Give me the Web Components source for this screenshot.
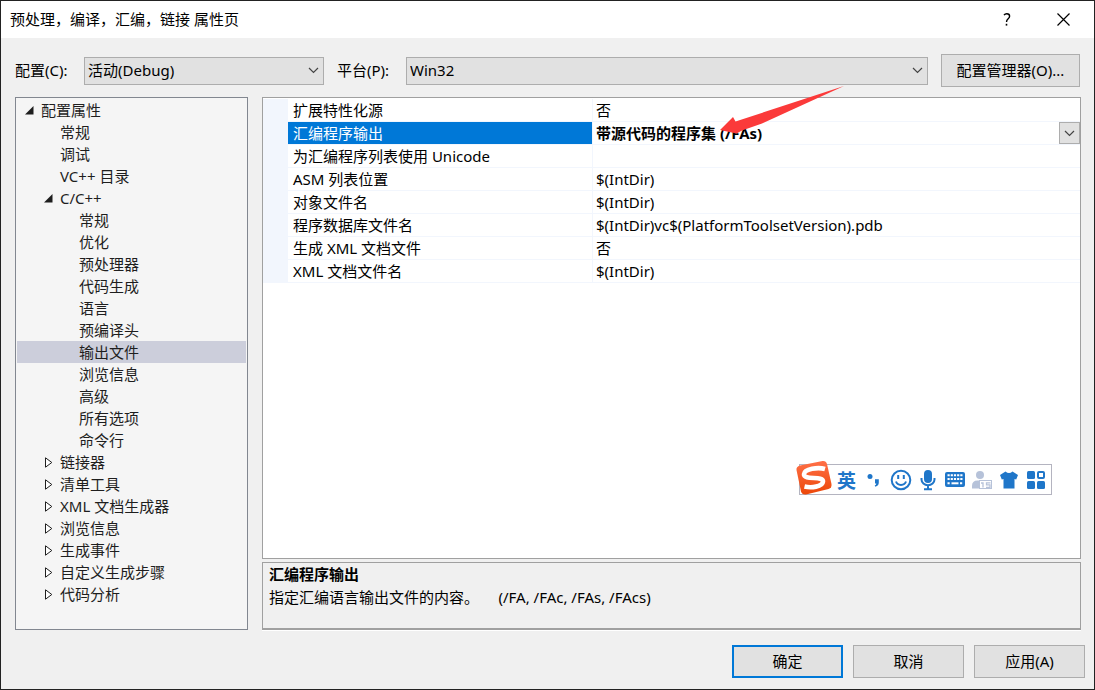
<!DOCTYPE html>
<html lang="zh-CN">
<head>
<meta charset="utf-8">
<title>预处理，编译，汇编，链接 属性页</title>
<style>
  body {
    margin: 0;
    color: #000;
    font: 15px/22px "Noto Sans", "Noto Sans CJK SC", sans-serif;
    background: #f0f0f0;
  }
</style>
</head>
<body>
<property-dialog heading="预处理，编译，汇编，链接 属性页">
  <select-field slot="tools" class="config" label="配置(C):" options="活动(Debug)|Debug|Release"></select-field>
  <select-field slot="tools" class="platform" label="平台(P):" options="Win32|x64"></select-field>
  <push-button slot="tools" class="manager">配置管理器(O)...</push-button>

  <nav-tree slot="nav">
    <tree-item label="配置属性" level="0" state="open">
      <tree-item label="常规" level="1"></tree-item>
      <tree-item label="调试" level="1"></tree-item>
      <tree-item label="VC++ 目录" level="1"></tree-item>
      <tree-item label="C/C++" level="1" state="open">
        <tree-item label="常规" level="2"></tree-item>
        <tree-item label="优化" level="2"></tree-item>
        <tree-item label="预处理器" level="2"></tree-item>
        <tree-item label="代码生成" level="2"></tree-item>
        <tree-item label="语言" level="2"></tree-item>
        <tree-item label="预编译头" level="2"></tree-item>
        <tree-item label="输出文件" level="2" selected></tree-item>
        <tree-item label="浏览信息" level="2"></tree-item>
        <tree-item label="高级" level="2"></tree-item>
        <tree-item label="所有选项" level="2"></tree-item>
        <tree-item label="命令行" level="2"></tree-item>
      </tree-item>
      <tree-item label="链接器" level="1" state="closed"></tree-item>
      <tree-item label="清单工具" level="1" state="closed"></tree-item>
      <tree-item label="XML 文档生成器" level="1" state="closed"></tree-item>
      <tree-item label="浏览信息" level="1" state="closed"></tree-item>
      <tree-item label="生成事件" level="1" state="closed"></tree-item>
      <tree-item label="自定义生成步骤" level="1" state="closed"></tree-item>
      <tree-item label="代码分析" level="1" state="closed"></tree-item>
    </tree-item>
  </nav-tree>

  <property-grid slot="grid">
    <pointer-arrow></pointer-arrow>
    <ime-bar></ime-bar>
  </property-grid>

  <help-pane slot="help" heading="汇编程序输出">指定汇编语言输出文件的内容。     (/FA, /FAc, /FAs, /FAcs)</help-pane>

  <push-button slot="actions" primary>确定</push-button>
  <push-button slot="actions">取消</push-button>
  <push-button slot="actions">应用(A)</push-button>
</property-dialog>

<script>
class BaseElement extends HTMLElement {
  connectedCallback() {
    if (this.shadowRoot) return;
    const root = this.attachShadow({ mode: "open" });
    root.innerHTML = "<style>*{box-sizing:border-box}</style>" + this.render();
  }
}

customElements.define("property-dialog", class extends BaseElement {
  render() {
    return `
    <style>
      :host { display: block; }
      .window { display: flex; flex-direction: column; min-height: 100vh; border: 1px solid #222; background: #f0f0f0; }
      header { display: flex; align-items: stretch; height: 37px; padding: 0 2px 0 9px; background: #fff; }
      h1 { flex: 1; margin: 0; font: inherit; line-height: 37px; }
      header button { display: grid; place-items: center; width: 57px; padding: 0; border: 0; background: none; color: #000; }
      .tools { display: flex; align-items: center; gap: 13px; padding: 16px 14px 10px; }
      .main { flex: 1; display: grid; grid-template-columns: 233px minmax(0, 1fr); gap: 14px; padding: 0 13px 0 14px; }
      .right { display: flex; flex-direction: column; gap: 3px; }
      footer { display: flex; justify-content: flex-end; gap: 10px; padding: 15px 9px 11px; }
      ::slotted(.config) { flex: 0 0 309px; }
      ::slotted(.platform) { flex: 1; }
      ::slotted(.manager) { flex: 0 0 139px; }
      ::slotted([slot=actions]) { flex: 0 0 111px; }
      ::slotted([slot=grid]) { flex: 1; }
    </style>
    <div class="window">
      <header>
        <h1>${this.getAttribute("heading")}</h1>
        <button type="button" aria-label="帮助"><svg width="8" height="13" viewBox="0 0 8 13" fill="none" stroke="#000" stroke-width="1.4"><path d="M1 2.2C1.600 1.300 2.500.8 3.800.8 5.500.8 6.600 1.700 6.600 3.200 6.600 5.900 3.500 5.700 3.500 9"/><path d="M3.500 10.800v1.800" stroke-width="1.600"/></svg></button>
        <button type="button" aria-label="关闭"><svg width="13" height="13" viewBox="0 0 13 13" stroke="#000" stroke-width="1.200"><path d="M.5.5l12 12M12.500.5l-12 12"/></svg></button>
      </header>
      <div class="tools"><slot name="tools"></slot></div>
      <div class="main">
        <slot name="nav"></slot>
        <div class="right"><slot name="grid"></slot><slot name="help"></slot></div>
      </div>
      <footer><slot name="actions"></slot></footer>
    </div>`;
  }
});

customElements.define("select-field", class extends BaseElement {
  render() {
    const options = this.getAttribute("options").split("|").map(o => `<option>${o}</option>`).join("");
    return `
    <style>
      :host { display: flex; align-items: center; min-width: 0; }
      label { flex: 0 0 69px; padding-bottom: 2px; white-space: nowrap; }
      .box { flex: 1; display: grid; min-width: 0; }
      select, svg { grid-area: 1 / 1; }
      select { appearance: none; width: 100%; height: 28px; margin: 0; padding: 0 24px 2px 3px; border: 1px solid #adadad; border-radius: 0; background: #e1e1e1; color: #000; font: inherit; }
      svg { justify-self: end; align-self: center; margin-right: 5px; pointer-events: none; }
    </style>
    <label for="s">${this.getAttribute("label")}</label>
    <div class="box">
      <select id="s">${options}</select>
      <svg width="11" height="7" viewBox="0 0 11 7" fill="none" stroke="#444" stroke-width="1.200"><path d="M1 1l4.500 4.500L10 1"/></svg>
    </div>`;
  }
});

customElements.define("push-button", class extends BaseElement {
  render() {
    return `
    <style>
      :host { display: block; }
      button { display: block; width: 100%; height: 33px; margin: 0; padding: 0 0 2px; border: 1px solid #adadad; background: #e1e1e1; color: #000; font: inherit; white-space: nowrap; }
      :host([primary]) button { border: 2px solid #0078d7; }
    </style>
    <button type="button"><slot></slot></button>`;
  }
});

customElements.define("nav-tree", class extends BaseElement {
  render() {
    return `
    <style>
      :host { display: block; box-sizing: border-box; padding: 1px; border: 1px solid #828790; background: #f5f5f5; color: #1e1e1e; }
    </style>
    <div role="tree"><slot></slot></div>`;
  }
});

customElements.define("tree-item", class extends BaseElement {
  render() {
    const state = this.getAttribute("state");
    const marks = {
      open: '<svg width="9" height="9" viewBox="0 0 9 9"><path d="M8.500 0v8.500H0z" fill="#1e1e1e"/></svg>',
      closed: '<svg width="9" height="11" viewBox="0 0 9 11"><path d="M1.500.8v9.400L7.800 5.500z" fill="#fff" stroke="#1e1e1e"/></svg>'
    };
    const level = Number(this.getAttribute("level"));
    return `
    <style>
      :host { display: block; }
      .row { display: flex; align-items: center; height: 22px; padding-left: ${8 + level * 19}px; }
      .mark { flex: 0 0 16px; display: flex; }
      .label { white-space: nowrap; }
      :host([selected]) .row { background: #cccedb; }
    </style>
    <div role="treeitem" aria-level="${level + 1}" ${state ? `aria-expanded="${state === "open"}"` : ""}>
      <div class="row"><span class="mark">${marks[state] || ""}</span><span class="label">${this.getAttribute("label")}</span></div>
      <slot></slot>
    </div>`;
  }
});

customElements.define("property-grid", class extends BaseElement {
  render() {
    const rows = [
      ["扩展特性化源", "否"],
      ["汇编程序输出", "带源代码的程序集 (/FAs)", true],
      ["为汇编程序列表使用 Unicode", ""],
      ["ASM 列表位置", "$(IntDir)"],
      ["对象文件名", "$(IntDir)"],
      ["程序数据库文件名", "$(IntDir)vc$(PlatformToolsetVersion).pdb"],
      ["生成 XML 文档文件", "否"],
      ["XML 文档文件名", "$(IntDir)"]
    ];
    const button = `<button type="button" aria-label="展开"><svg width="11" height="7" viewBox="0 0 11 7" fill="none" stroke="#444" stroke-width="1.200"><path d="M1 1l4.500 4.500L10 1"/></svg></button>`;
    return `
    <style>
      :host { display: block; position: relative; box-sizing: border-box; border: 1px solid #a0a0a0; background: #fff; }
      table { width: 100%; margin-top: 1px; table-layout: fixed; border-collapse: separate; border-spacing: 0; }
      col.gutter { width: 25px; }
      col.name { width: 305px; }
      th, td { height: 23px; padding: 0; border-bottom: 1px solid #f2f6fd; text-align: left; font-weight: 400; line-height: 22px; white-space: nowrap; }
      td.gutter { background: #f2f6fd; }
      th { padding-left: 5px; border-right: 1px solid #f2f6fd; }
      .value { padding-left: 3px; }
      .selected th { background: #0078d7 padding-box; color: #fff; }
      .selected .value { font-weight: 700; }
      .cell { display: flex; justify-content: space-between; height: 22px; }
      button { display: grid; place-items: center; width: 21px; height: 22px; padding: 0; border: 1px solid #adadad; background: #e1e1e1; }
    </style>
    <table>
      <colgroup><col class="gutter"><col class="name"><col></colgroup>
      <tbody>${rows.map(([name, value, selected]) => `
        <tr class="${selected ? "selected" : ""}"><td class="gutter"></td><th scope="row">${name}</th><td class="value"><div class="cell"><span>${value}</span>${selected ? button : ""}</div></td></tr>`).join("")}
      </tbody>
    </table>
    <slot></slot>`;
  }
});

/* Red callout that lies over the grid and points at the chosen value. */
customElements.define("pointer-arrow", class extends BaseElement {
  render() {
    return `
    <style>
      :host { position: absolute; left: 457px; top: -12px; pointer-events: none; }
      svg { display: block; }
    </style>
    <svg width="125" height="50" viewBox="0 0 125 50" aria-hidden="true"><path d="M0 44L13 31L15.500 35.500L124 0L42 37.500L22 44.500L16.500 47.500z" fill="#fb3a3a"/></svg>`;
  }
});

/* Floating input-method toolbar. */
customElements.define("ime-bar", class extends BaseElement {
  render() {
    return `
    <style>
      :host { position: absolute; right: 28px; bottom: 63px; color: #1f76c9; }
      .bar { display: flex; align-items: center; height: 31px; border: 1px solid #b4b4c0; background: #fff; }
      .logo { margin: 0 0 4px -5px; }
      .keys { display: flex; align-items: center; padding-right: 2px; }
      button { display: grid; place-items: center; width: 27px; height: 29px; padding: 0; border: 0; background: none; color: inherit; font: 700 19px/29px "Noto Sans CJK SC", sans-serif; }
      svg { display: block; }
    </style>
    <div class="bar">
      <svg class="logo" width="38" height="36" viewBox="0 0 38 36">
        <defs><linearGradient id="g" x1="0" y1="0" x2="0" y2="1"><stop offset="0" stop-color="#ff7048"/><stop offset="1" stop-color="#ec4708"/></linearGradient></defs>
        <path d="M5 5.500L27.500 1Q31 .5 32 4L36.500 24Q37 28 33.500 29L11 34.500Q7 35 6 31.500L1.500 10Q1 6.500 5 5.500z" fill="url(#g)"/>
        <path d="M30 9C23 7 9.500 8.800 9 14.200C8.500 20.500 28.500 15.500 28 21.500C27.500 27 16 28 9.500 26.500" fill="none" stroke="#fff" stroke-width="4.600"/>
      </svg>
      <div class="keys">
        <button type="button">英</button>
        <button type="button" aria-label="标点"><svg width="13" height="14" viewBox="0 0 13 14" fill="currentColor"><circle cx="3" cy="3.500" r="2.500"/><path d="M8 6.200h3.800v3.300q0 3.200-3.400 4.300l-.7-1.300q1.500-.7 1.600-2H8z"/></svg></button>
        <button type="button" aria-label="表情"><svg width="22" height="22" viewBox="0 0 22 22" fill="none" stroke="currentColor" stroke-width="2"><circle cx="11" cy="11" r="9.300"/><path d="M8.200 6v4M13.800 6v4M6 12.500c1.500 4.500 8.500 4.500 10 0"/></svg></button>
        <button type="button" aria-label="语音"><svg width="16" height="22" viewBox="0 0 16 22" fill="none" stroke="currentColor" stroke-width="2"><rect x="4" y="1" width="8" height="13" rx="4" fill="currentColor" stroke="none"/><path d="M1.500 9v1.500a6.500 5.800 0 0 0 13 0V9M8 16v4M4 20.200h8"/></svg></button>
        <button type="button" aria-label="键盘"><svg width="22" height="17" viewBox="0 0 22 17"><rect x="1" y="1" width="20" height="15" rx="2" fill="currentColor"/><path d="M3.500 4.300h15M3.500 8h15M3.500 12.300h2.500M16 12.300h2.500" stroke="#fff" stroke-width="2" stroke-dasharray="2.200 1"/><path d="M7.500 12.300h7" stroke="#fff" stroke-width="2"/></svg></button>
        <button type="button" aria-label="用户"><svg width="22" height="20" viewBox="0 0 22 20" fill="#b6c2d9"><circle cx="9" cy="5" r="4"/><path d="M1 18.500v-2.500q0-5.500 5.500-5.500h5v8z"/><rect x="8.500" y="10.500" width="12" height="8" fill="#fff" stroke="#b6c2d9"/><path d="M10 13h2v4.500M19.500 12.800h-4v2h3.500v2.500H15" fill="none" stroke="#b6c2d9" stroke-width="1.300"/></svg></button>
        <button type="button" aria-label="皮肤"><svg width="20" height="20" viewBox="0 0 20 20"><path d="M1 5L6.500 1.500Q10 4.500 13.500 1.500L19 5L17.200 9.500L15.500 9V18.500H4.500V9L2.800 9.500z" fill="currentColor"/></svg></button>
        <button type="button" aria-label="工具"><svg width="18" height="18" viewBox="0 0 18 18" fill="currentColor"><rect x="0" y="0" width="8" height="8" rx="1.500"/><rect x="0" y="10" width="8" height="8" rx="1.500"/><rect x="10" y="10" width="8" height="8" rx="1.500"/><rect x="11" y="1" width="6" height="6" rx="1" fill="#fff" stroke="currentColor" stroke-width="2"/></svg></button>
      </div>
    </div>`;
  }
});

customElements.define("help-pane", class extends BaseElement {
  render() {
    return `
    <style>
      :host { display: block; box-sizing: border-box; min-height: 68px; padding: 0 6px; border: 1px solid #a0a0a0; border-bottom-width: 2px; box-shadow: 0 1px #fff; line-height: 23px; }
      h2 { margin: 0; font: inherit; font-weight: 700; }
      p { margin: 0; white-space: pre-wrap; }
    </style>
    <h2>${this.getAttribute("heading")}</h2>
    <p><slot></slot></p>`;
  }
});
</script>
</body>
</html>
